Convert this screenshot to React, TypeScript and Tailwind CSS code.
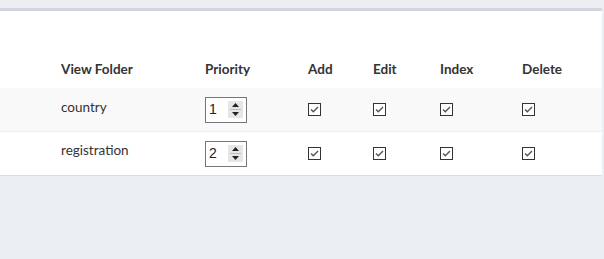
import React from "react";

function Check() {
  return (
    <svg width="13" height="13" viewBox="0 0 13 13" className="block">
      <rect x="0.5" y="0.5" width="12" height="12" fill="#fff" stroke="#333" strokeWidth="1" />
      <path d="M3 6.5 L5.3 8.8 L10 4" fill="none" stroke="#555" strokeWidth="1.4" />
    </svg>
  );
}

function NumInput({ v }: { v: string }) {
  return (
    <div className="w-[42px] h-[26px] border border-[#767676] bg-white flex items-center pl-[3px] pr-[3px]">
      <span className="flex-1 text-[14px] text-[#222]" style={{ fontFamily: "'Liberation Sans', sans-serif" }}>{v}</span>
      <div className="w-[15px] h-[17px] bg-[#e6e6e6] flex flex-col items-center justify-between py-[2px]">
        <svg width="7" height="4" viewBox="0 0 7 4"><path d="M0 4 L3.5 0 L7 4Z" fill="#222" /></svg>
        <div className="w-[11px] h-px bg-[#bbb]" />
        <svg width="7" height="4" viewBox="0 0 7 4"><path d="M0 0 L3.5 4 L7 0Z" fill="#222" /></svg>
      </div>
    </div>
  );
}

const rows = [
  { name: "country", p: "1" },
  { name: "registration", p: "2" },
];

const cols = "grid grid-cols-[61px_144px_103px_65px_67px_82px_1fr]";

export default function App() {
  return (
    <div className="w-[604px] h-[259px] bg-[#ebeef3] pt-[8px]" style={{ fontFamily: "Lato, 'Open Sans', sans-serif" }}>
      <div className="mr-[2px] bg-white border-t-[3px] border-[#d3d6e1] border-b border-b-[#dcdcdc]">
        <div className={`${cols} h-[77px] items-end pb-[9px] text-[13.5px] font-bold text-[#333]`}>
          <div />
          <div>View Folder</div>
          <div>Priority</div>
          <div>Add</div>
          <div>Edit</div>
          <div>Index</div>
          <div>Delete</div>
        </div>
        {rows.map((r, i) => (
          <div
            key={r.name}
            className={`${cols} h-[43px] items-center text-[13.5px] text-[#333] ${i === 0 ? "bg-[#f9f9f9] border-b border-[#eeeeee] h-[44px]" : ""}`}
          >
            <div />
            <div className={i === 0 ? "-mt-[4px]" : "-mt-[6px]"}>{r.name}</div>
            <div><NumInput v={r.p} /></div>
            <div><Check /></div>
            <div><Check /></div>
            <div><Check /></div>
            <div><Check /></div>
          </div>
        ))}
      </div>
    </div>
  );
}
